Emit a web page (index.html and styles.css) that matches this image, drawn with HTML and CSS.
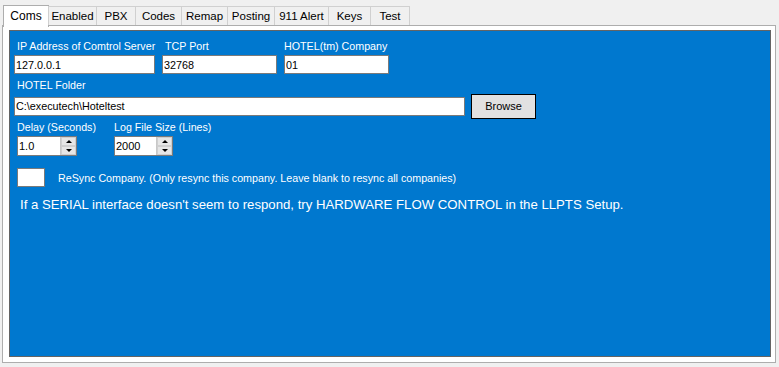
FILE: index.html
```html
<!DOCTYPE html>
<html lang="en">
<head>
    <meta charset="UTF-8">
    <meta name="viewport" content="width=device-width, initial-scale=1.0">
    <title>Coms</title>
    <link rel="stylesheet" href="styles.css">
</head>
<body>
    <div class="tabs">
        <div class="tab active">Coms</div>
        <div class="tab" style="width:49px">Enabled</div>
        <div class="tab" style="width:40px">PBX</div>
        <div class="tab" style="width:47px">Codes</div>
        <div class="tab" style="width:47px">Remap</div>
        <div class="tab" style="width:48px">Posting</div>
        <div class="tab" style="width:55px">911 Alert</div>
        <div class="tab" style="width:43px">Keys</div>
        <div class="tab" style="width:40px">Test</div>
    </div>

    <div class="page">
        <div class="panel">
            <!-- Servidor -->
            <div class="row">
                <div class="field f-ip">
                    <label>IP Address of Comtrol Server</label>
                    <input class="box" type="text" value="127.0.0.1">
                </div>
                <div class="field f-port">
                    <label>TCP Port</label>
                    <input class="box" type="text" value="32768">
                </div>
                <div class="field f-company">
                    <label class="flush">HOTEL(tm) Company</label>
                    <input class="box" type="text" value="01">
                </div>
            </div>

            <!-- Carpeta -->
            <label class="folder-label">HOTEL Folder</label>
            <div class="row folder-row">
                <input class="box folder" type="text" value="C:\executech\Hoteltest">
                <button class="browse">Browse</button>
            </div>

            <!-- Tiempos -->
            <div class="row spins">
                <div class="field f-delay">
                    <label class="flush">Delay (Seconds)</label>
                    <div class="spin">
                        <span class="spin-val">1.0</span>
                        <span class="spin-btns">
                            <span class="up"></span>
                            <span class="down"></span>
                        </span>
                    </div>
                </div>
                <div class="field f-log">
                    <label class="flush">Log File Size (Lines)</label>
                    <div class="spin">
                        <span class="spin-val">2000</span>
                        <span class="spin-btns">
                            <span class="up"></span>
                            <span class="down"></span>
                        </span>
                    </div>
                </div>
            </div>

            <div class="row resync">
                <div class="resync-box"></div>
                <span>ReSync Company. (Only resync this company. Leave blank to resync all companies)</span>
            </div>

            <p class="hint">If a SERIAL interface doesn't seem to respond, try HARDWARE FLOW CONTROL in the LLPTS Setup.</p>
        </div>
    </div>
</body>
</html>
```

FILE: styles.css
```css
body {
    margin: 0;
    background-color: #f0f0f0;
    font-family: "Liberation Sans", Arial, sans-serif;
    font-size: 10.7px;
    color: #000;
}
.tabs {
    display: flex;
    align-items: flex-end;
    height: 26px;
    padding-left: 3px;
    position: relative;
    z-index: 1;
}
.tab {
    box-sizing: border-box;
    height: 19px;
    margin-bottom: 1px;
    border: 1px solid #d0d0d0;
    border-bottom: none;
    background-color: #f0f0f0;
    text-align: center;
    line-height: 18px;
    font-size: 11.5px;
    margin-left: -1px;
}
.tab.active {
    width: 46px;
    height: 22px;
    margin-left: 0;
    margin-bottom: -1px;
    background-color: #fff;
    border-color: #adadad;
    line-height: 20px;
    font-size: 12px;
}
.page {
    box-sizing: border-box;
    margin: -1px 3px 0 2px;
    height: 338px;
    border: 1px solid #adadad;
    background-color: #fff;
    padding: 4px 4px 5px 6px;
}
.panel {
    box-sizing: border-box;
    height: 100%;
    border: 1px solid #646464;
    background-color: #0078cf;
    color: #fff;
    padding: 8px 0 0 4px;
}
.row {
    display: flex;
}
.field {
    display: flex;
    flex-direction: column;
    margin-right: 7px;
}
.field label {
    height: 16px;
    line-height: 14px;
    padding-left: 3px;
    white-space: nowrap;
}
.field label.flush {
    padding-left: 0;
}
.box {
    box-sizing: border-box;
    height: 19px;
    border: 1px solid #7a7a7a;
    background: #fff;
    font: 10.8px "Liberation Sans", Arial, sans-serif;
    color: #000;
    padding: 0 1px;
    margin: 0;
    outline: none;
}
.f-ip { width: 141px; }
.f-port { width: 115px; }
.f-company { width: 105px; }
.f-ip .box, .f-port .box, .f-company .box { width: 100%; }

.folder-label {
    display: block;
    margin-top: 4px;
    padding-left: 3px;
    height: 16px;
    line-height: 14px;
}
.folder-row {
    align-items: center;
    height: 24px;
}
.folder {
    width: 451px;
}
.browse {
    box-sizing: border-box;
    width: 65px;
    height: 25px;
    margin-left: 6px;
    border: 1px solid #000;
    background-color: #e1e1e1;
    font: 11px "Liberation Sans", Arial, sans-serif;
    color: #000;
    padding: 0;
}
.spins {
    margin-top: 2px;
    padding-left: 3px;
}
.f-delay { width: 90px; }
.f-log { width: 100px; }
.spin {
    box-sizing: border-box;
    display: flex;
    width: 60px;
    height: 20px;
    border: 1px solid #7a7a7a;
    background-color: #fff;
    color: #000;
    font-size: 11px;
}
.f-log .spin { width: 59px; }
.spin-val {
    flex: 1;
    line-height: 18px;
    padding-left: 1px;
}
.spin-btns {
    display: flex;
    flex-direction: column;
    width: 15px;
    border-left: 1px solid #c8c8c8;
}
.spin-btns span {
    flex: 1;
    background-color: #e6e6e6;
    border: 1px solid #cfcfcf;
    display: flex;
    align-items: center;
    justify-content: center;
}
.spin-btns .up::after {
    content: "";
    border-left: 3px solid transparent;
    border-right: 3px solid transparent;
    border-bottom: 3px solid #000;
}
.spin-btns .down::after {
    content: "";
    border-left: 3px solid transparent;
    border-right: 3px solid transparent;
    border-top: 3px solid #000;
}
.resync {
    margin-top: 12px;
    padding-left: 3px;
    align-items: center;
}
.resync-box {
    box-sizing: border-box;
    width: 28px;
    height: 19px;
    background-color: #fff;
    border: 1px solid #7a7a7a;
    margin-right: 13px;
}
.hint {
    margin: 10px 0 0 6px;
    font-size: 13.2px;
}
```
